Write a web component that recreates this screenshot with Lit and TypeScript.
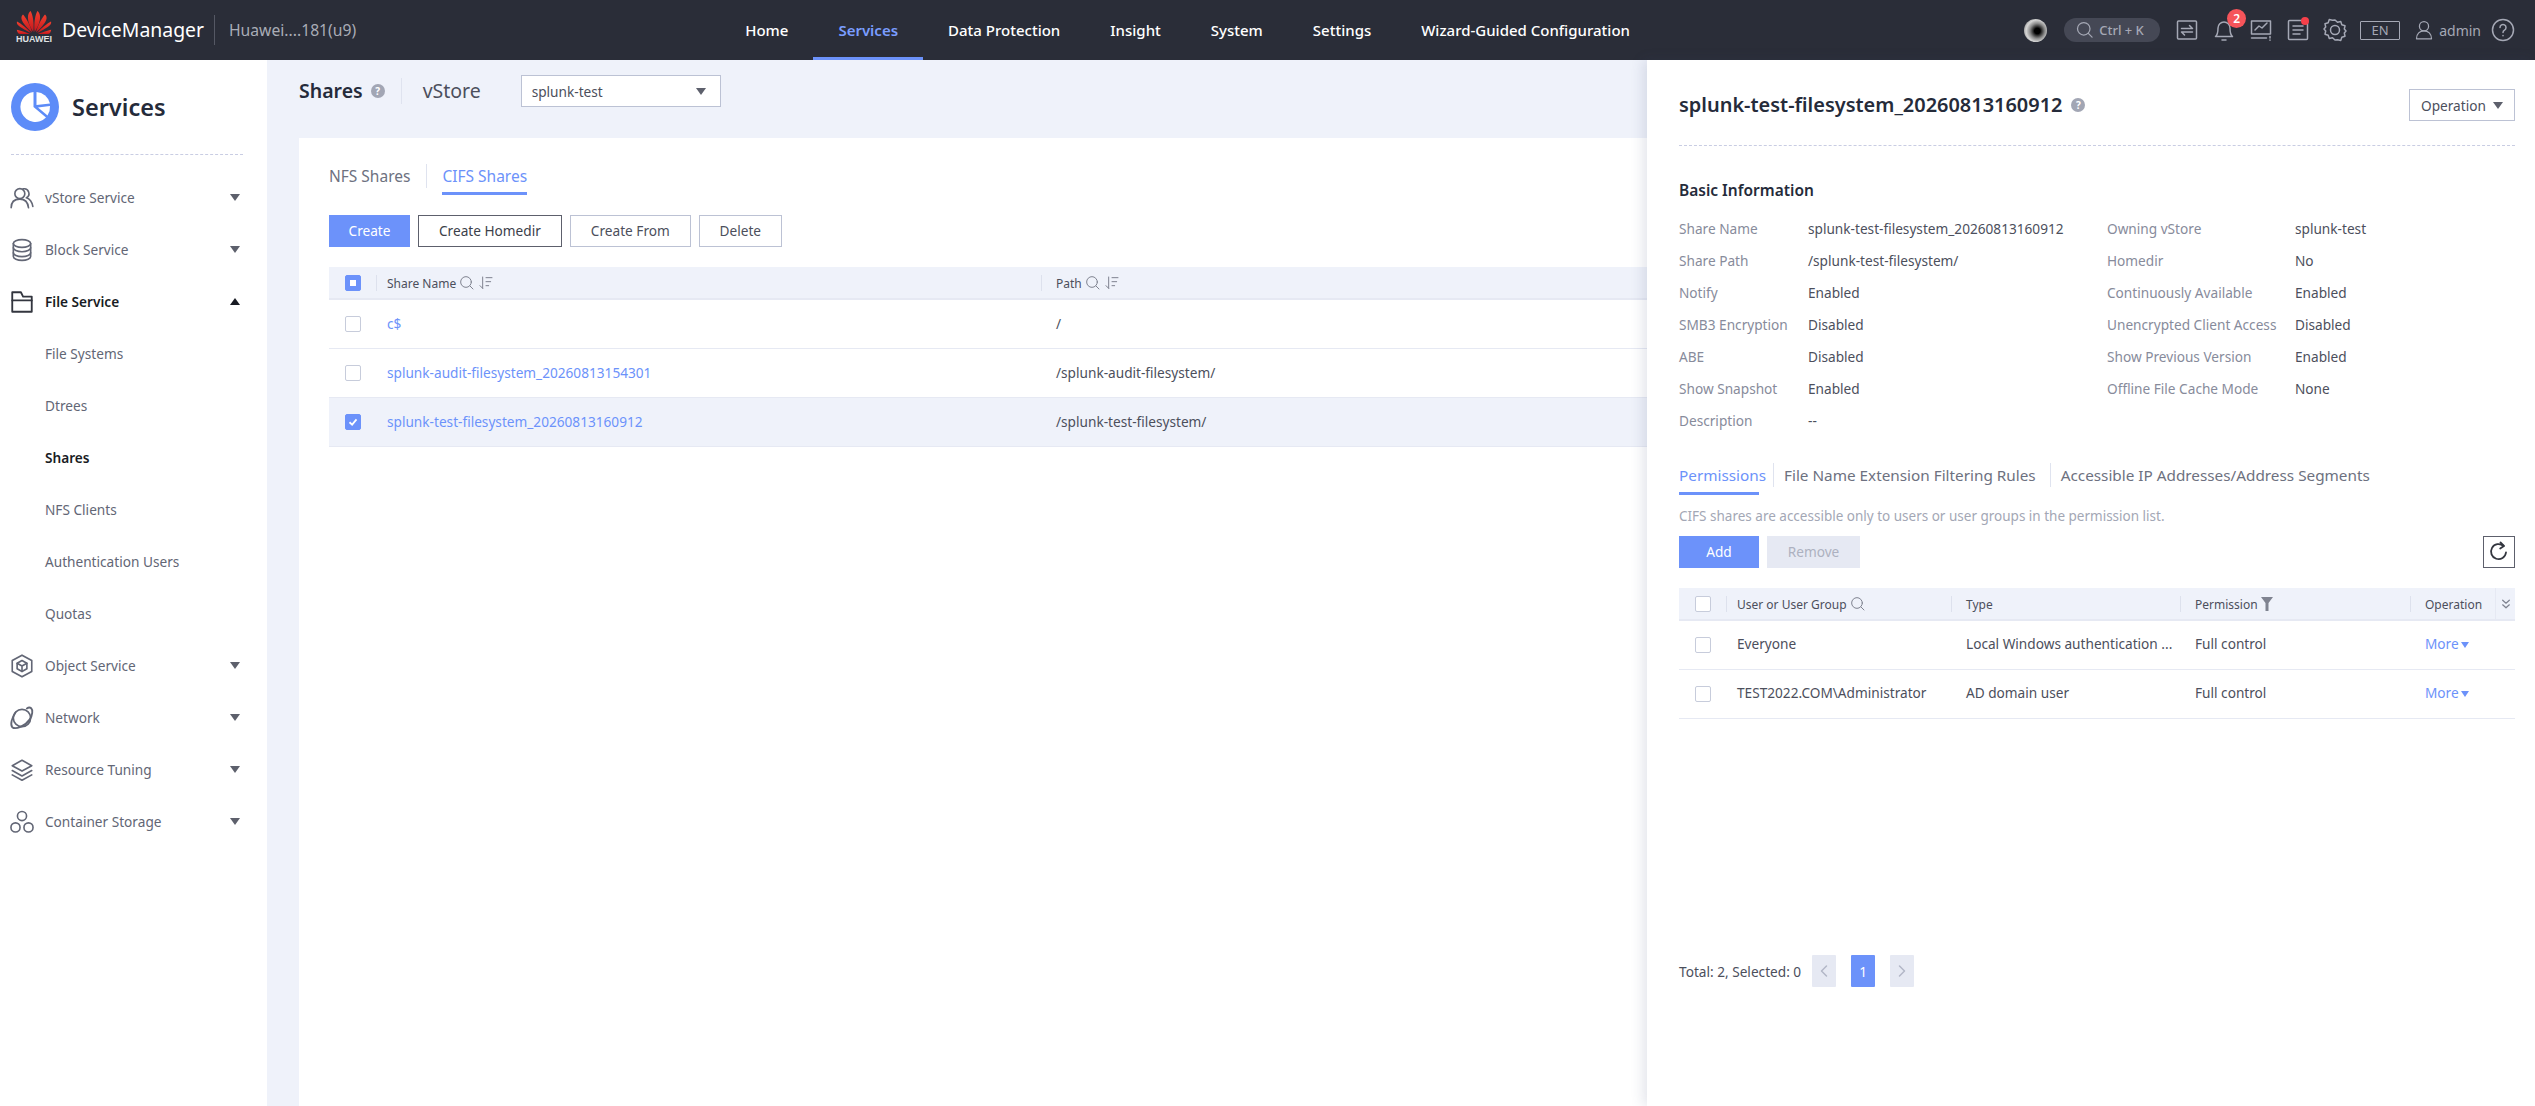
import { LitElement, html, css, svg } from "lit";
import { customElement } from "lit/decorators.js";

const ico = (body: unknown, cls = "ic", vb = "0 0 24 24") =>
  html`<svg class=${cls} viewBox=${vb} fill="none" stroke="currentColor" stroke-width="1.5" stroke-linecap="round" stroke-linejoin="round">${body}</svg>`;

const ICONS: Record<string, unknown> = {
  users: svg`<circle cx="10" cy="8" r="4.6"/><path d="M2 21c0-5 3-8 8-8s7.500 3 8 8"/><path d="M13 3.600a4.400 4.400 0 0 1 3 8.200c3 1 5.300 4 6 8"/>`,
  db: svg`<ellipse cx="12" cy="6" rx="8" ry="3.600"/><path d="M4 6v12c0 2 3.600 3.600 8 3.600s8-1.600 8-3.600V6"/><path d="M4 10c0 2 3.600 3.600 8 3.600s8-1.600 8-3.600"/><path d="M4 14.500c0 2 3.600 3.600 8 3.600s8-1.600 8-3.600"/>`,
  folder: svg`<path d="M3 21V3h8l2 4h8v14z" stroke-width="1.700"/><path d="M3 10.500h18" stroke-width="1.700"/>`,
  cube: svg`<path d="M12 2l9 5v10l-9 5-9-5V7z"/><path d="M12 7l4.500 2.500v5L12 17l-4.500-2.500v-5z"/><path d="M7.500 9.500L12 12l4.500-2.500M12 12v5"/>`,
  planet: svg`<circle cx="12" cy="12" r="8"/><path d="M6 7C2.500 12 1 18 3 20.500c3 2.500 12-1 16-7 3-4 3-9 1.500-10.500-1-.8-3-.5-4 .2" stroke-width="1.700"/>`,
  layers: svg`<path d="M12 3l9 5-9 5-9-5z"/><path d="M3 12.500l9 5 9-5"/><path d="M3 16.500l9 5 9-5"/>`,
  hex: svg`<circle cx="12" cy="6.500" r="4.200"/><circle cx="6" cy="17" r="4.200"/><circle cx="18" cy="17" r="4.200"/>`,
};

const NAV = ["Home", "Services", "Data Protection", "Insight", "System", "Settings", "Wizard-Guided Configuration"];

const caret = (up = false) => html`<i class="caret ${up ? "up" : ""}"></i>`;
const search = ico(svg`<circle cx="10.500" cy="10.500" r="8"/><path d="M16.500 16.500l4.500 4.500"/>`, "hic");
const check = (state = "") => html`<span class="cb ${state}">${state === "on"
  ? html`<svg viewBox="0 0 16 16" fill="none" stroke="#fff" stroke-width="2"><path d="M4 8.300l3 2.700 5-6"/></svg>`
  : ""}</span>`;

const INFO: [string, string, string?, string?][] = [
  ["Share Name", "splunk-test-filesystem_20260813160912", "Owning vStore", "splunk-test"],
  ["Share Path", "/splunk-test-filesystem/", "Homedir", "No"],
  ["Notify", "Enabled", "Continuously Available", "Enabled"],
  ["SMB3 Encryption", "Disabled", "Unencrypted Client Access", "Disabled"],
  ["ABE", "Disabled", "Show Previous Version", "Enabled"],
  ["Show Snapshot", "Enabled", "Offline File Cache Mode", "None"],
  ["Description", "--"],
];

@customElement("app-root")
export class AppRoot extends LitElement {
  static styles = css`
    :host { display: block; position: relative; height: 1106px; overflow: hidden; background: #eff2fa;
      font-family: "Noto Sans", "Open Sans", sans-serif; font-size: 13.65px; color: #4c4f5c; }
    * { box-sizing: border-box; }
    .top { display: flex; align-items: center; height: 60px; background: #2a2d38; color: #fff; padding: 0 20px 0 16px; }
    .logo { width: 36px; height: 35px; display: flex; flex-direction: column; align-items: center; margin-top: -6px; }
    .logo svg { width: 36px; height: 24px; flex: none; }
    .logo b { font: 700 9px/11px "Liberation Sans", sans-serif; color: #dfe0e3; letter-spacing: 0; }
    .dm { font-size: 19.4px; margin-left: 10px; line-height: 24px; white-space: nowrap; }
    .sep { width: 1px; height: 30px; background: #555864; margin: 0 14px 0 10px; }
    .dev { font-size: 15.7px; color: #a9acb6; white-space: nowrap; }
    .nav { display: flex; height: 60px; margin-left: 364px; }
    .nav a { display: flex; align-items: center; padding: 0 25px; font-size: 15px; font-weight: 500; color: #fff; white-space: nowrap; }
    .nav a.on { color: #7a9dff; border-bottom: 3px solid #6c92fa; padding-top: 3px; font-weight: 600; }
    .tools { margin-left: auto; display: flex; align-items: center; color: #a5a8b5; }
    .ball { width: 23px; height: 23px; border-radius: 50%; background: radial-gradient(circle at 58% 52%, #000 0 16%, #2d2d2d 24%, #8c8c8c 42%, #d5d5d5 62%, #5a5a5a 100%); margin-right: 17px; }
    .pill { display: flex; align-items: center; gap: 4px; width: 96px; height: 24px; border-radius: 12px; background: #454855; padding-left: 11px; font-size: 13px; font-weight: 500; color: #a5a8b5; margin-right: 15px; white-space: nowrap; }
    .pill svg { width: 20px; height: 20px; }
    .ti { width: 24px; height: 24px; margin-right: 13px; display: block; position: relative; }
    .ti svg { width: 24px; height: 24px; display: block; }
    .badge { position: absolute; left: 15px; top: -9px; width: 19px; height: 19px; border-radius: 50%; background: #f6545a; color: #fff; font-size: 12px; font-weight: 600; display: flex; align-items: center; justify-content: center; }
    .dot { position: absolute; left: 15px; top: -1px; width: 8px; height: 8px; border-radius: 50%; background: #f6404a; }
    .en { width: 40px; height: 19px; border: 1.5px solid #a5a8b5; border-radius: 1px; display: flex; align-items: center; justify-content: center; font-size: 13px; margin: 0 14px 0 0; }
    .ti.usr { margin-right: 5px; width: 20px; }
    .ti.usr svg { width: 20px; }
    .adm { font-size: 14px; color: #a5a8b5; margin-right: 10px; }
    .ti.help { margin-right: 0; }

    .body { display: flex; height: 1046px; }
    .side { width: 267px; flex: none; background: #fff; padding: 23px 27px 0 11px; }
    .brand { display: flex; align-items: center; gap: 13px; height: 48px; font-size: 23.5px; font-weight: 600; color: #252b3a; }
    .brand svg { width: 48px; height: 48px; }
    .dash { border-bottom: 1px dashed #c9cde3; }
    .side .dash { margin: 23px -3px 17px 0; }
    .mi { display: flex; align-items: center; height: 52px; color: #626675; white-space: nowrap; padding-bottom: 2px; }
    .mi .mico { width: 34px; display: flex; flex: none; margin-top: 2px; }
    .mi .mico svg { width: 26px; height: 26px; color: #626675; margin-left: -2px; }
    .mi.sub { padding-left: 34px; }
    .mi.act { color: #191c24; font-weight: 600; }
    .mi.act .mico svg { color: #33363f; }
    .mi .caret { margin-left: auto; }
    .caret { display: inline-block; width: 0; height: 0; border: 5px solid transparent; border-top: 7px solid #5d606c; border-bottom: 0; flex: none; }
    .caret.up { border-top: 0; border-bottom: 7px solid #191c24; }

    .main { flex: 1; min-width: 0; padding: 15px 32px 0; display: flex; flex-direction: column; }
    .hd { display: flex; align-items: center; height: 32px; flex: none; }
    .hd h1 { font-size: 19.5px; font-weight: 600; margin: 0; color: #252b3a; padding-bottom: 1px; }
    .q { width: 14px; height: 14px; border-radius: 50%; background: #a2a6b4; color: #fff; font-size: 10px; font-weight: 700; display: inline-flex; align-items: center; justify-content: center; flex: none; }
    .hd .q { margin-left: 8px; }
    .vsep { width: 1px; height: 26px; background: #dfe3ef; margin: 0 21px 0 16px; }
    .vs { font-size: 19.5px; color: #4c4f5c; width: 98px; padding-bottom: 1px; }
    .sel { width: 200px; height: 32px; background: #fff; border: 1px solid #bcc2d4; display: flex; align-items: center; justify-content: space-between; padding: 0 14px 0 10px; color: #4c4f5c; }
    .card { background: #fff; margin-top: 31px; flex: 1; padding: 26px 30px; }
    .tabs { display: flex; font-size: 15.5px; line-height: 24px; color: #6d7180; }
    .tab { padding-bottom: 4px; border-bottom: 3px solid transparent; white-space: nowrap; }
    .tab.on { color: #6c92fa; border-bottom-color: #6c92fa; }
    .tabsep { width: 1px; height: 24px; background: #dfe3ef; margin: 0 15px 0 16px; }
    .btns { display: flex; gap: 8px; margin-top: 20px; }
    .btn { height: 32px; padding: 0 20px 1px; display: flex; align-items: center; border: 1px solid #bcc2d4; background: #fff; color: #4c4f5c; white-space: nowrap; }
    .btn.pri { background: #6c92fa; border-color: #6c92fa; color: #fff; }
    .btn.dark { border-color: #5d606c; color: #3c3f4a; }
    .btn.off { background: #e6e9f3; border-color: #e6e9f3; color: #adb1c0; }
    .btns .pri { width: 81px; justify-content: center; padding: 0 0 1px; }
    .btns .del { width: 83px; justify-content: center; padding: 0 0 1px; }

    .tb { margin-top: 20px; }
    .tr { display: grid; height: 49px; align-items: center; border-bottom: 1px solid #e6e9f3; white-space: nowrap; }
    .tr.h { height: 33px; background: #eff2fa; font-size: 12px; color: #4c4f5c; border-bottom-width: 2px; border-bottom-color: #e6e9f3; }
    .tr.sel-row { background: #eff2fa; }
    .share .tr { grid-template-columns: 47px 665px 1fr; }
    .perm .tr { grid-template-columns: 47px 225px 229px 230px 85px 1fr; }
    .perm .c { padding-bottom: 3px; }
    .cb { display: block; width: 16px; height: 16px; margin-left: 16px; border: 1px solid #c7ccdb; border-radius: 2px; background: #fff; }
    .cb.on { background: #6c92fa; border-color: #6c92fa; }
    .cb.on svg { display: block; width: 14px; height: 14px; }
    .cb.mid { background: #6c92fa; border-color: #6c92fa; display: flex; align-items: center; justify-content: center; }
    .cb.mid::after { content: ""; width: 6px; height: 6px; background: #fff; }
    .hc { display: flex; align-items: center; gap: 3px; height: 16px; border-left: 1px solid #dde1ed; padding: 1px 0 0 14px; }
    .hc.first { padding-left: 10px; }
    .hic { width: 16px; height: 16px; color: #7f8390; flex: none; }
    .c { padding: 0 0 2px 15px; overflow: hidden; }
    .c.first { padding-left: 11px; }
    .lnk { color: #6c92fa; }

    .panel { position: absolute; left: 1647px; top: 60px; right: 0; bottom: 0; background: #fff; box-shadow: -4px 0 12px rgba(60, 70, 110, .14); padding: 29px 20px 0 32px; }
    .pt { display: flex; align-items: center; height: 32px; }
    .pt h2 { font-size: 19.95px; font-weight: 600; margin: 0; color: #252b3a; white-space: nowrap; padding-bottom: 1px; }
    .pt .q { margin-left: 9px; }
    .op { margin-left: auto; width: 106px; height: 32px; border: 1px solid #bcc2d4; display: flex; align-items: center; justify-content: space-between; padding: 0 11px; color: #4c4f5c; }
    .panel .dash { margin-top: 24px; }
    h3 { font-size: 15.5px; font-weight: 600; line-height: 24px; margin: 32px 0 12px; color: #252b3a; }
    .info { display: grid; grid-template-columns: 129px 299px 188px 1fr; grid-auto-rows: 32px; align-items: center; white-space: nowrap; }
    .info span { padding-bottom: 3px; }
    .info .k { color: #878b9b; }
    .info .v { color: #4c4f5c; }
    .ptabs { display: flex; margin-top: 25px; font-size: 15.3px; line-height: 24px; color: #6d7180; }
    .ptabs .tab { padding-bottom: 5px; }
    .ptabs .tab.on { width: 80px; }
    .ptabs .tabsep { margin: 0 10px 0 14px; }
    .hint { margin-top: 11px; line-height: 20px; color: #a3a7b5; font-size: 13.5px; }
    .pbtns { display: flex; gap: 8px; margin-top: 10px; }
    .pbtns .pri { width: 80px; justify-content: center; padding: 0 0 1px; }
    .pbtns .off { width: 93px; justify-content: center; padding: 0 0 1px; }
    .ref { margin-left: auto; width: 32px; height: 32px; border: 1px solid #5d606c; display: flex; align-items: center; justify-content: center; color: #33363f; }
    .ref svg { width: 24px; height: 24px; stroke-width: 1.8; }
    .more { color: #6c92fa; display: flex; align-items: center; gap: 2px; }
    .more .caret { border-width: 4px; border-top: 6px solid #6c92fa; border-bottom: 0; margin-top: 2px; }
    .filt { width: 12px; height: 14px; fill: #7f8390; stroke: none; }
    .dbl { width: 10px; height: 12px; color: #7f8390; margin-left: 5px; }
    .tog { display: flex; align-items: center; height: 31px; border-left: 1px solid #e6e9f3; }
    .pager { display: flex; align-items: center; margin-top: 236px; white-space: nowrap; }
    .pg { width: 24px; height: 32px; background: #e6e9f3; color: #b2b7c7; display: flex; align-items: center; justify-content: center; margin-left: 15px; border-radius: 1px; }
    .pg.first { margin-left: 11px; }
    .pg.on { background: #6c92fa; color: #fff; }
    .pg svg { width: 12px; height: 14px; }
  `;

  private petals() {
    const p = svg`
      <path d="M17.300 22C14 17 11.500 11 12 6 12.300 3 14 1.500 14.600 1 16.500 4 18.500 13 17.300 22Z"/>
      <path d="M16 22.500C11 18 6.500 13 5.500 9 5.200 7.500 5.600 5.500 7 4.500 9 6.500 15 16 16 22.500Z"/>
      <path d="M15 23C9 20 3.500 17 1.500 14.500 .8 13.500 .7 12.300 1 11.500 4 13 12 19 15 23Z"/>
      <path d="M14 24H4C2.500 24 1.200 22.600 .8 19.800 4 20.500 10 22.500 14 24Z"/>`;
    return html`<svg viewBox="0 0 36 24">
      <defs><linearGradient id="hw" x1="0" y1="0" x2="0" y2="1"><stop offset="0" stop-color="#f0402e"/><stop offset="1" stop-color="#c4161c"/></linearGradient></defs>
      <g fill="url(#hw)">${p}</g>
      <g fill="url(#hw)" transform="translate(36) scale(-1,1)">${p}</g>
    </svg>`;
  }

  private topbar() {
    return html`<header class="top">
      <div class="logo">${this.petals()}<b>HUAWEI</b></div>
      <div class="dm">DeviceManager</div>
      <div class="sep"></div>
      <div class="dev">Huawei....181(u9)</div>
      <nav class="nav">${NAV.map((n) => html`<a class=${n === "Services" ? "on" : ""}>${n}</a>`)}</nav>
      <div class="tools">
        <div class="ball"></div>
        <div class="pill">${ico(svg`<circle cx="10.500" cy="10.500" r="7.500"/><path d="M16 16l4.500 4.500"/>`)}Ctrl + K</div>
        <span class="ti">${ico(svg`<rect x="2.500" y="3" width="19" height="18" rx="1"/><path d="M6.500 10.500h11l-3-3M17.500 14h-11l3 3"/>`)}</span>
        <span class="ti">${ico(svg`<path d="M3.500 18.500c2.500-2 2.500-4.500 2.500-8.500a6 6 0 0 1 12 0c0 4 0 6.500 2.500 8.500z"/><path d="M10 22h4"/>`)}<span class="badge">2</span></span>
        <span class="ti">${ico(svg`<path d="M2.500 3h19v13h-19z"/><path d="M6 12l4-4 3 2 5-5"/><path d="M2.500 20h15M21 18.500v1.500M21 22v.2"/>`)}</span>
        <span class="ti">${ico(svg`<rect x="2.500" y="2.500" width="19" height="19" rx="1"/><path d="M7 8h10M7 12h10M7 16h7"/>`)}<span class="dot"></span></span>
        <span class="ti">${ico(svg`<circle cx="12" cy="12" r="4.500"/><path d="M12 2l2.500 2.300 3.300-.7 1 3.200 3.200 1-.7 3.200 1.700 2-1.700 2 .7 3.200-3.200 1-1 3.200-3.300-.7L12 22l-2.500-2.300-3.300.7-1-3.200-3.200-1 .7-3.200L1 11l1.700-2L2 5.800l3.200-1 1-3.200 3.300.7z" stroke-width="1.500"/>`)}</span>
        <span class="en">EN</span>
        <span class="ti usr">${ico(svg`<circle cx="12" cy="7.500" r="5.500"/><path d="M3 22.500c0-6 4-9.500 9-9.500s9 3.500 9 9.500z"/>`)}</span>
        <span class="adm">admin</span>
        <span class="ti help">${ico(svg`<circle cx="12" cy="12" r="10.500"/><path d="M9 9.500a3 3 0 1 1 4.500 2.600c-1 .6-1.500 1.200-1.500 2.400"/><path d="M12 17.500v.3"/>`, "ic")}</span>
      </div>
    </header>`;
  }

  private sidebar() {
    const item = (t: string, icon: string, up = false, act = false) => html`<div class="mi ${act ? "act" : ""}">
      <span class="mico">${ico(ICONS[icon])}</span>${t}${caret(up)}</div>`;
    const sub = (t: string, act = false) => html`<div class="mi sub ${act ? "act" : ""}">${t}</div>`;
    return html`<aside class="side">
      <div class="brand">
        <svg viewBox="0 0 48 48"><circle cx="24" cy="24" r="24" fill="#5d8cf8"/>
          <path fill="#fff" d="M22.500 9A15 15 0 1 0 35 34.500L22.500 24Z"/>
          <path fill="#fff" d="M25.500 9A15 15 0 0 1 39 20.500L25.500 22Z"/>
          <path fill="#fff" d="M27 24.500L39 23a15 15 0 0 1-2.500 9.500Z"/></svg>
        Services
      </div>
      <div class="dash"></div>
      ${item("vStore Service", "users")}
      ${item("Block Service", "db")}
      ${item("File Service", "folder", true, true)}
      ${sub("File Systems")}${sub("Dtrees")}${sub("Shares", true)}${sub("NFS Clients")}${sub("Authentication Users")}${sub("Quotas")}
      ${item("Object Service", "cube")}
      ${item("Network", "planet")}
      ${item("Resource Tuning", "layers")}
      ${item("Container Storage", "hex")}
    </aside>`;
  }

  private sortIc() {
    return ico(svg`<path d="M7 3v17M7 20l-4-4M12 4h9M12 10h7M12 16h4"/>`, "hic");
  }

  private mainArea() {
    const rows = [
      ["c$", "/", ""],
      ["splunk-audit-filesystem_20260813154301", "/splunk-audit-filesystem/", ""],
      ["splunk-test-filesystem_20260813160912", "/splunk-test-filesystem/", "on"],
    ];
    return html`<main class="main">
      <div class="hd">
        <h1>Shares</h1><span class="q">?</span><span class="vsep"></span>
        <span class="vs">vStore</span>
        <div class="sel">splunk-test ${caret()}</div>
      </div>
      <section class="card">
        <div class="tabs"><span class="tab">NFS Shares</span><span class="tabsep"></span><span class="tab on">CIFS Shares</span></div>
        <div class="btns">
          <div class="btn pri">Create</div><div class="btn dark">Create Homedir</div><div class="btn">Create From</div><div class="btn del">Delete</div>
        </div>
        <div class="tb share">
          <div class="tr h">${check("mid")}<div class="hc first">Share Name ${search}${this.sortIc()}</div><div class="hc">Path ${search}${this.sortIc()}</div></div>
          ${rows.map((r) => html`<div class="tr ${r[2] ? "sel-row" : ""}">${check(r[2])}<div class="c first lnk">${r[0]}</div><div class="c">${r[1]}</div></div>`)}
        </div>
      </section>
    </main>`;
  }

  private panel() {
    const more = html`<div class="c more">More${caret()}</div>`;
    const perm = [
      ["Everyone", "Local Windows authentication ...", "Full control"],
      ["TEST2022.COM\\Administrator", "AD domain user", "Full control"],
    ];
    return html`<aside class="panel">
      <div class="pt"><h2>splunk-test-filesystem_20260813160912</h2><span class="q">?</span>
        <div class="op">Operation ${caret()}</div></div>
      <div class="dash"></div>
      <h3>Basic Information</h3>
      <div class="info">
        ${INFO.map((r) => html`<span class="k">${r[0]}</span><span class="v">${r[1]}</span><span class="k">${r[2] ?? ""}</span><span class="v">${r[3] ?? ""}</span>`)}
      </div>
      <div class="ptabs"><span class="tab on">Permissions</span><span class="tabsep"></span><span class="tab">File Name Extension Filtering Rules</span><span class="tabsep"></span><span class="tab">Accessible IP Addresses/Address Segments</span></div>
      <div class="hint">CIFS shares are accessible only to users or user groups in the permission list.</div>
      <div class="pbtns">
        <div class="btn pri">Add</div><div class="btn off">Remove</div>
        <div class="ref">${ico(svg`<path d="M19 12.500A7.500 7.500 0 1 1 16.500 6"/><path d="M13.500 2.500l3.500 3.500-3.800 2.500" />`)}</div>
      </div>
      <div class="tb perm">
        <div class="tr h">${check()}
          <div class="hc first">User or User Group ${search}</div>
          <div class="hc">Type</div>
          <div class="hc">Permission <svg class="filt" viewBox="0 0 12 14"><path d="M0 0h12L7.500 6v8h-3V6z"/></svg></div>
          <div class="hc">Operation</div>
          <div class="tog">${ico(svg`<path d="M2 1.500l4 3.500 4-3.500M2 7l4 3.500L10 7"/>`, "dbl", "0 0 12 12")}</div>
        </div>
        ${perm.map((r) => html`<div class="tr">${check()}<div class="c first">${r[0]}</div><div class="c">${r[1]}</div><div class="c">${r[2]}</div>${more}<span></span></div>`)}
      </div>
      <div class="pager">
        <span>Total: 2, Selected: 0</span>
        <span class="pg first">${ico(svg`<path d="M8.500 2L3.500 7l5 5"/>`, "", "0 0 12 14")}</span>
        <span class="pg on">1</span>
        <span class="pg">${ico(svg`<path d="M3.500 2l5 5-5 5"/>`, "", "0 0 12 14")}</span>
      </div>
    </aside>`;
  }

  render() {
    return html`${this.topbar()}<div class="body">${this.sidebar()}${this.mainArea()}</div>${this.panel()}`;
  }
}
